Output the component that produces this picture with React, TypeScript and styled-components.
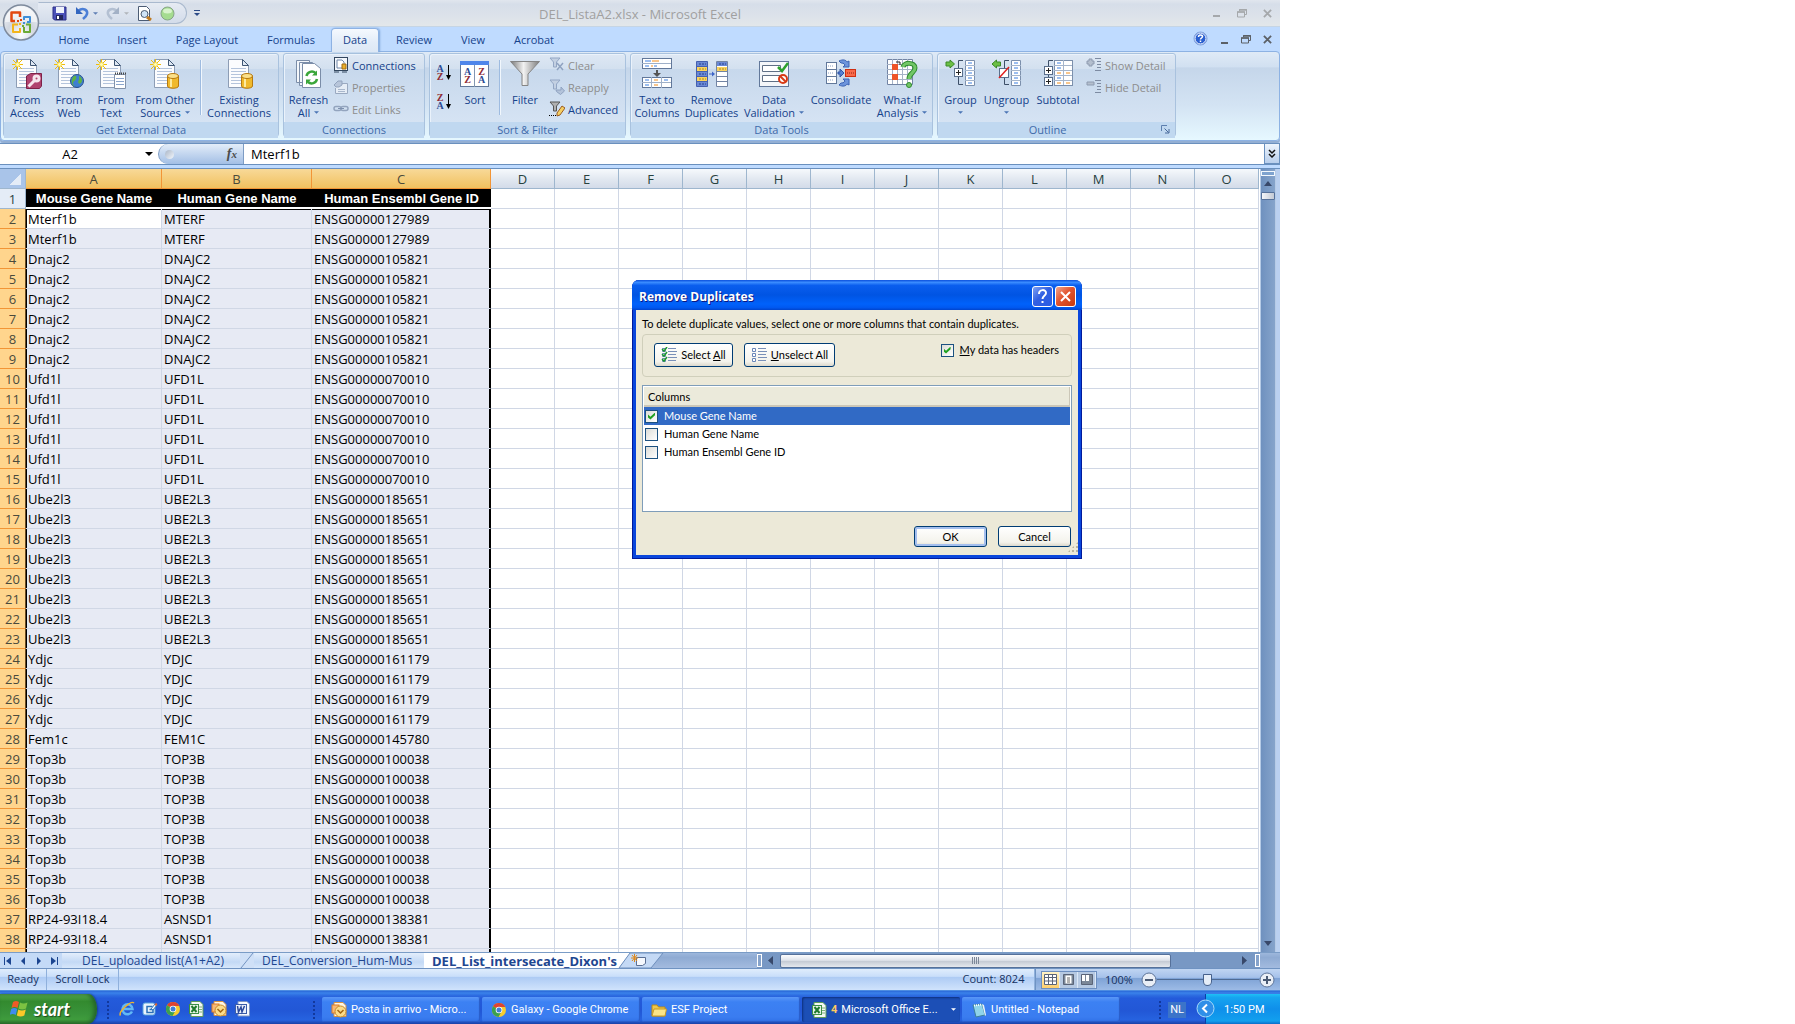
import React from 'react';
import styled, { createGlobalStyle, css } from 'styled-components';

const ui = `'Open Sans', 'Noto Sans', sans-serif`;
const dialogFont = `Lato, 'Noto Sans', sans-serif`;

const Global = createGlobalStyle`
  * { box-sizing: border-box; }
  html, body { margin: 0; height: 100%; background: #fff; overflow: hidden; }
  button, input { font: inherit; color: inherit; margin: 0; padding: 0; border: 0; background: none; }
  button { cursor: pointer; }
`;

const Desktop = styled.div`
  position: relative;
  display: flex;
  flex-direction: column;
  width: 100%;
  max-width: 1280px;
  height: 100vh;
  overflow: hidden;
  background: #bfdbff;
  font: 11px/13px ${ui};
  color: #15428b;
`;

/* ---------- title bar and tabs ---------- */

const TitleBar = styled.header`
  flex: none;
  display: grid;
  grid-template-columns: 1fr auto 1fr;
  align-items: center;
  height: 27px;
  background: linear-gradient(#e1e6ee, #d6dee9 16%, #dce2ea 60%, #e3e7ea);
  border-bottom: 1px solid #c6d5e4;
`;
const QuickAccess = styled.div`
  display: flex;
  align-items: center;
  gap: 4px;
  padding-left: 38px;
  height: 100%;
`;
const QuickPill = styled.div`
  display: flex;
  align-items: center;
  gap: 8px;
  width: 149px;
  height: 22px;
  padding-left: 13px;
  border: 1px solid #a9b9ce;
  border-left-color: transparent;
  border-radius: 0 11px 11px 0;
  background: linear-gradient(#e6ebf3, #d3dcea);
`;
const ToolButton = styled.button`
  display: flex;
  align-items: center;
  gap: 4px;
  flex: none;
`;
const OfficeButton = styled.button`
  position: absolute;
  left: 2px;
  top: 3px;
  width: 38px;
  height: 38px;
  z-index: 2;
  svg { display: block; }
`;
const WindowTitle = styled.h1`
  margin: 0;
  font: 400 13px/18px ${ui};
  color: #a0a0a0;
  padding-top: 2px;
`;
const WindowButtons = styled.div<{ $dim?: boolean }>`
  display: flex;
  justify-content: flex-end;
  align-items: center;
  gap: ${p => (p.$dim ? 16 : 12)}px;
  padding-right: 8px;
  color: ${p => (p.$dim ? '#a5a8ab' : '#5b6066')};
  button { display: flex; }
`;
const TabStrip = styled.nav`
  flex: none;
  display: flex;
  align-items: flex-end;
  height: 24px;
  padding-left: 47px;
  background: #bfdbff;
`;
const TabList = styled.div`
  flex: 1;
  display: flex;
  gap: 4px;
`;
const Tab = styled.button<{ $w: number; $active?: boolean }>`
  width: ${p => p.$w}px;
  height: 23px;
  padding-bottom: 2px;
  font: 11px/15px ${ui};
  color: #15428b;
  border: 1px solid transparent;
  border-bottom: 0;
  border-radius: 4px 4px 0 0;
  ${p => p.$active && css`
    position: relative;
    z-index: 1;
    margin-bottom: -1px;
    padding-bottom: 3px;
    height: 24px;
    border-color: #8db2e3;
    background: linear-gradient(#f5f9fe, #e2ecf8 60%, #dde8f5);
    box-shadow: 1px 0 2px #7fa6d8;
  `}
`;

/* ---------- ribbon ---------- */

const Ribbon = styled.section`
  flex: none;
  display: flex;
  gap: 4px;
  height: 90px;
  padding: 1px 2px 3px;
  border: 1px solid #8db2e3;
  border-radius: 4px;
  background: linear-gradient(#dfeaf6, #d1e0f1 17%, #c5d6ea 18%, #d3e3f3 60%, #e6f8ff);
  box-shadow: 0 2px 0 #93afd4, 0 3px 0 #a7c1e0;
`;
const RibbonGroup = styled.div<{ $w: number }>`
  flex: none;
  display: flex;
  flex-direction: column;
  width: ${p => p.$w}px;
  border: 1px solid #a9c2de;
  border-radius: 3px;
  background: linear-gradient(#dee8f4, #d3e0ef 18%, #c7d8ec 19%, #d9e6f5);
  box-shadow: inset 1px 1px 0 #eaf2fb;
`;
const GroupBody = styled.div`
  flex: 1;
  display: flex;
  align-items: flex-start;
  padding: 0 2px;
`;
const GroupCaption = styled.div`
  flex: none;
  display: flex;
  align-items: center;
  height: 16px;
  padding-bottom: 1px;
  background: #c0d8f0;
  color: #3e6aaa;
  span { flex: 1; text-align: center; }
  svg { margin: 0 5px 0 4px; }
`;
const BigButton = styled.button<{ $w: number }>`
  flex: none;
  display: flex;
  flex-direction: column;
  align-items: center;
  width: ${p => p.$w}px;
  height: 68px;
  padding-top: 4px;
  font: 11px/13px ${ui};
  color: #15428b;
  white-space: nowrap;
  svg.pic { display: block; flex: none; margin-bottom: 3px; }
`;
const LabelLine = styled.span`
  display: flex;
  align-items: center;
  gap: 4px;
  min-height: 13px;
`;
const Separator = styled.i`
  flex: none;
  width: 2px;
  height: 55px;
  margin: 6px 2px 0;
  border-left: 1px solid #9ebbe0;
  border-right: 1px solid #f1f7fd;
`;
const SmallList = styled.div`
  display: flex;
  flex-direction: column;
  padding-left: 2px;
`;
const SmallButton = styled.button<{ $off?: boolean }>`
  display: flex;
  align-items: center;
  gap: 3px;
  height: 22px;
  font: 11px/13px ${ui};
  color: ${p => (p.$off ? '#8d8d8d' : '#15428b')};
  white-space: nowrap;
  svg { flex: none; }
`;
const SortPair = styled.div`
  display: flex;
  flex-direction: column;
  gap: 9px;
  padding: 9px 0 0 3px;
  button { display: flex; }
`;

/* ---------- formula bar ---------- */

const FormulaBar = styled.div`
  flex: none;
  display: flex;
  height: 22px;
  margin-top: 2px;
  border: solid #6a90be;
  border-width: 1px 0;
  background: #fff;
  color: #000;
  font: 13px/18px ${ui};
`;
const NameBox = styled.div`
  display: flex;
  align-items: center;
  justify-content: space-between;
  width: 158px;
  flex: none;
  padding-right: 5px;
  input { width: 140px; text-align: center; }
`;
const FxArea = styled.div`
  flex: none;
  display: flex;
  align-items: center;
  justify-content: space-between;
  width: 86px;
  padding: 0 6px;
  border: solid #7d9cc4;
  border-width: 0 1px;
  border-radius: 10px 0 0 10px;
  background: linear-gradient(#e3edf9, #a3bfe5);
`;
const Knob = styled.i`
  width: 9px;
  height: 9px;
  border-radius: 50%;
  background: linear-gradient(135deg, #a9b5c6, #f4f8fd);
`;
const FxButton = styled.button`
  font: italic 700 14px/16px 'Liberation Serif', serif;
  color: #4c4c4c;
  small { font-size: 11px; }
`;
const FormulaInput = styled.input`
  flex: 1;
  min-width: 0;
  padding-left: 7px;
`;
const ExpandButton = styled.button`
  flex: none;
  display: flex;
  align-items: center;
  justify-content: center;
  width: 16px;
  border: 1px solid #6a90be;
  border-top: 0;
  background: linear-gradient(#eef5fd, #b9cfec);
`;

/* ---------- worksheet ---------- */

const Workspace = styled.main`
  flex: 1;
  min-height: 0;
  display: flex;
  margin-top: 3px;
  border-top: 1px solid #6a90be;
  background: #fff;
`;
const SheetView = styled.div`
  flex: 1;
  min-width: 0;
  overflow: hidden;
`;
const Sheet = styled.table`
  table-layout: fixed;
  border-collapse: separate;
  border-spacing: 0;
  width: 1259px;
  font: 13px/18px ${ui};
  color: #000;
`;
const cell = css`
  height: 20px;
  padding: 1px 0 0 2px;
  overflow: hidden;
  white-space: nowrap;
  border: solid #d0d7e5;
  border-width: 0 1px 1px 0;
`;
const Corner = styled.td`
  ${cell}
  background: linear-gradient(135deg, transparent 50%, #e4ecf7 50%) no-repeat 10px 4px / 11px 12px, #a9c4e9;
  border-color: #9eb6ce;
`;
const ColHead = styled.th<{ $on?: boolean }>`
  ${cell}
  padding: 1px 0 0;
  font-weight: 400;
  color: #27413e;
  text-align: center;
  background: linear-gradient(#f6f9fc, #e3e9f1 50%, #d3dbe9);
  border-color: #9eb6ce;
  ${p => p.$on && css`
    background: linear-gradient(#f8d998, #f1c15f);
    border-color: #f29536;
    color: #4a4a3c;
  `}
`;
const RowHead = styled.th<{ $on?: boolean }>`
  ${cell}
  padding: 1px 0 0;
  font-weight: 400;
  text-align: center;
  color: #27413e;
  background: #e4ecf7;
  border-color: #9eb6ce;
  ${p => p.$on && css`
    background: #ffd58d;
    border-color: #f29536;
    border-right-color: #6b4a20;
    color: #4a4a3c;
  `}
`;
const TitleCell = styled.td`
  ${cell}
  padding: 2px 0 0;
  background: #000;
  border-width: 0 0 2px;
  border-color: #fff;
  color: #fff;
  font: 700 13px/16px 'Liberation Sans', Arial, sans-serif;
  text-align: center;
`;
const Cell = styled.td<{ $first?: boolean; $left?: boolean; $right?: boolean; $active?: boolean }>`
  ${cell}
  background: ${p => (p.$active ? '#fff' : '#e7eaf4')};
  box-shadow: ${p => [
    p.$first && 'inset 0 1px #000',
    p.$left && 'inset 1px 0 #000',
    p.$right && 'inset -1px 0 #000',
  ].filter(Boolean).join(', ') || 'none'};
  ${p => p.$right && css`border-right-color: #000;`}
`;
const Blank = styled.td`${cell}`;

const VScroll = styled.div`
  flex: none;
  display: flex;
  flex-direction: column;
  align-items: center;
  width: 16px;
  margin-right: 4px;
  padding: 2px 0 4px;
  border: solid #b6cbe6;
  border-width: 0 1px;
  background: linear-gradient(90deg, #6f91bf, #86a4cb);
  button { display: flex; align-items: center; justify-content: center; }
`;
const SplitBox = styled.i`
  flex: none;
  width: 14px;
  height: 5px;
  border: 1px solid #f3f8fd;
  background: #7fa3cf;
`;
const VThumb = styled.div`
  width: 14px;
  height: 8px;
  margin-top: 1px;
  border: 1px solid #56719a;
  border-radius: 1px;
  background: linear-gradient(90deg, #f3f5f9, #c3c9d4);
`;
const Grow = styled.span`flex: 1;`;
const WorkEdge = styled.i`
  flex: none;
  width: 4px;
  margin-left: -4px;
  background: #bad0f0;
`;

/* ---------- sheet tabs ---------- */

const SheetBar = styled.div`
  flex: none;
  display: flex;
  align-items: stretch;
  height: 17px;
  padding-right: 20px;
  border-top: 1px solid #7a9cc6;
  border-bottom: 1px solid #6f93c2;
  background: linear-gradient(#9db7dc, #8fabd3 30%, #a3bbdf);
`;
const SheetNav = styled.div`
  display: flex;
  align-items: center;
  justify-content: space-around;
  width: 62px;
  flex: none;
  background: #c4daf7;
  button { display: flex; }
`;
const SheetTab = styled.button<{ $w: number; $pad: number; $active?: boolean }>`
  flex: none;
  width: ${p => p.$w}px;
  padding-left: ${p => p.$pad}px;
  font: 12px/14px ${ui};
  text-align: left;
  white-space: nowrap;
  color: #1e4690;
  background: linear-gradient(#e3eefc, #c3d9f5 60%, #d7e7fb);
  ${p => p.$active && css`
    font-weight: 700;
    font-size: 13px;
    background: #fff;
  `}
`;
const Slant = styled.svg`flex: none; display: block;`;
const NewSheet = styled.button`display: flex;`;
const HScroll = styled.div`
  display: flex;
  align-items: center;
  width: 503px;
  height: 100%;
  background: #7898c4;
`;
const Splitter = styled.i`
  flex: none;
  width: 5px;
  height: 13px;
  border: 1px solid #fff;
  background: #86a3cb;
`;
const HThumb = styled.div`
  flex: none;
  display: flex;
  align-items: center;
  justify-content: center;
  gap: 1px;
  width: 391px;
  height: 14px;
  border: 1px solid #56719a;
  border-radius: 2px;
  background: linear-gradient(#fdfdfe, #dfe3ea 45%, #c3c9d3 50%, #e5e8ee);
  i { width: 1px; height: 7px; background: #7c8798; }
`;
const HArrow = styled.button<{ $w: number }>`
  display: flex;
  align-items: center;
  justify-content: center;
  width: ${p => p.$w}px;
`;

/* ---------- status bar ---------- */

const StatusBar = styled.footer`
  flex: none;
  display: flex;
  height: 21px;
  color: #15305f;
  background: linear-gradient(#e0edfc, #c9defa 35%, #aecbf4 40%, #d0e3fc);
`;
const StatusItem = styled.span<{ $w: number }>`
  width: ${p => p.$w}px;
  padding-top: 3px;
  text-align: center;
  border-right: 1px solid #8fb0dc;
`;
const StatusRight = styled.div`
  flex: none;
  display: flex;
  align-items: center;
  width: 245px;
  padding-left: 5px;
  border-left: 1px solid #6f93c2;
  background: linear-gradient(#c0d5f2, #a5c1ea 40%, #7fa3d6 45%, #9dbbe6);
`;
const ViewButtons = styled.div`
  flex: none;
  display: flex;
  width: 56px;
  height: 18px;
  border: 1px solid #6c8ebf;
  button { flex: 1; display: flex; align-items: center; justify-content: center; background: #b6c9e2; border-right: 1px solid #dbe7f6; }
  button:first-child { background: linear-gradient(#fff3c8, #fdce6c); }
`;
const Zoom = styled.div`
  display: flex;
  align-items: center;
  flex: 1;
  min-width: 0;
  padding-left: 8px;
  label { flex: none; width: 36px; }
`;
const Slider = styled.input`
  appearance: none;
  flex: 1;
  width: 0;
  min-width: 0;
  height: 12px;
  background: linear-gradient(transparent 5px, #4f6b94 5px, #4f6b94 6px, transparent 6px);
  &::-webkit-slider-thumb {
    appearance: none;
    width: 9px;
    height: 12px;
    border: 1px solid #46618c;
    border-radius: 1px 1px 5px 5px;
    background: #e5edf8;
  }
`;

/* ---------- task bar ---------- */

const TaskBar = styled.nav`
  flex: none;
  display: flex;
  align-items: stretch;
  height: 34px;
  border-top: 1px solid #4d8ce0;
  background: linear-gradient(#2a68d8, #3a82ea 6%, #2c6be0 14%, #245bdb 22%, #2257d6 60%, #2663e0 88%, #1941a5);
  color: #fff;
  font: 11px/14px Roboto, 'Noto Sans', sans-serif;
`;
const StartButton = styled.button`
  flex: none;
  display: flex;
  align-items: center;
  gap: 5px;
  width: 97px;
  margin-top: 3px;
  padding-left: 10px;
  border-radius: 0 9px 9px 0 / 0 15px 15px 0;
  background: linear-gradient(#5da557, #4ba045 8%, #338a2f 25%, #39933a 65%, #3f9c3d 85%, #2b6f2a);
  box-shadow: inset -3px 0 4px #24642a, 1px 0 2px #163b93;
  font: italic 700 18px/22px Lato, sans-serif;
  text-shadow: 1px 1px 1px #1c4a1c;
`;
const Grip = styled.i<{ $ml: number }>`
  flex: none;
  width: 4px;
  margin: 9px 0 5px ${p => p.$ml}px;
  background: radial-gradient(circle, #12389c 1px, transparent 1px) 0 0 / 4px 4px;
`;
const QuickLaunch = styled.div`
  flex: none;
  display: flex;
  align-items: center;
  gap: 7px;
  width: 193px;
  padding: 3px 0 0 9px;
  button { display: flex; }
`;
const TaskList = styled.div`
  flex: 1;
  min-width: 0;
  display: flex;
  gap: 2px;
  padding: 6px 0 2px 6px;
`;
const Task = styled.button<{ $on?: boolean }>`
  flex: 0 0 158px;
  display: flex;
  align-items: center;
  gap: 4px;
  padding: 0 4px 0 9px;
  border-radius: 2px;
  white-space: nowrap;
  background: ${p => (p.$on ? '#1c4fb6' : 'linear-gradient(#5a97f7, #3c81f3 20%, #3a7cf0 80%, #3071e6)')};
  box-shadow: ${p => (p.$on ? 'inset 1px 1px 2px #0e307c' : 'inset -1px -1px 1px #2a5cc8')};
  svg { flex: none; }
  b { color: #ffca62; }
`;
const TaskLabel = styled.span`
  flex: 1;
  text-align: left;
`;
const Lang = styled.span`
  align-self: center;
  margin: 4px 19px 0 6px;
  padding: 1px 2px;
  background: #3b74c9;
`;
const Tray = styled.div`
  position: relative;
  flex: none;
  display: flex;
  align-items: center;
  width: 75px;
  margin-top: 3px;
  padding: 2px 0 0 18px;
  border-left: 1px solid #0b3fa8;
  background: linear-gradient(#1fc0f5, #16a4f0 12%, #0f8fea 50%, #12a0ee 90%, #0b6cc9);
`;
const TrayToggle = styled.button`
  position: absolute;
  left: -10px;
  top: 5px;
  display: flex;
`;

/* ---------- dialog ---------- */

const Dialog = styled.section`
  position: absolute;
  left: 632px;
  top: 280px;
  width: 450px;
  z-index: 5;
  padding: 0 4px 4px;
  border-radius: 7px 7px 0 0;
  background: #0a46dc;
  box-shadow: inset -1px -1px #001a9c, inset 1px 0 #001a9c;
  color: #000;
  font: 11px/14px ${dialogFont};
`;
const DialogTitle = styled.header`
  display: flex;
  align-items: center;
  gap: 2px;
  height: 30px;
  margin: 0 -4px;
  padding: 3px 6px 0 7px;
  border-radius: 7px 7px 0 0;
  background: linear-gradient(#0a4fdc, #3a8cff 8%, #0a5eee 18%, #0054e3 50%, #0062fb 80%, #0058f0 92%, #0044cc);
  h2 { flex: 1; margin: 0; color: #fff; font: 700 12px/16px ${ui}; text-shadow: 1px 1px #0a1883; }
`;
const CaptionButton = styled.button<{ $close?: boolean }>`
  display: flex;
  align-items: center;
  justify-content: center;
  width: 21px;
  height: 21px;
  border: 1px solid #fff;
  border-radius: 3px;
  background: ${p => (p.$close ? 'linear-gradient(135deg, #f0a58c, #e2542e 45%, #c63a11)' : 'linear-gradient(135deg, #7fa2f3, #3260e2 45%, #2a5ce4)')};
`;
const DialogBody = styled.div`
  display: flex;
  flex-direction: column;
  padding: 7px 6px 8px;
  background: #ece9d8;
  p { margin: 0; }
`;
const OptionBox = styled.div`
  display: flex;
  align-items: flex-start;
  gap: 11px;
  height: 43px;
  margin-top: 3px;
  padding: 8px 12px 0 11px;
  border: 1px solid #d0cfbb;
  border-radius: 4px;
`;
const XpButton = styled.button<{ $w: number; $h: number; $default?: boolean }>`
  display: flex;
  align-items: center;
  justify-content: center;
  gap: 4px;
  width: ${p => p.$w}px;
  height: ${p => p.$h}px;
  border: 1px solid #003c74;
  border-radius: 3px;
  background: linear-gradient(#fff, #f4f3ec 80%, #dcd8cc);
  box-shadow: ${p => (p.$default ? 'inset 0 0 0 2px #a5bfee' : 'none')};
`;
const Option = styled.label`
  display: flex;
  align-items: center;
  gap: 6px;
`;
const Box = styled.input`
  appearance: none;
  flex: none;
  display: block;
  width: 13px;
  height: 13px;
  border: 1px solid #1c5180;
  background: linear-gradient(135deg, #dcdcd7, #fff);
  &:checked::after {
    content: '';
    display: block;
    width: 7px;
    height: 7px;
    margin: 2px;
    background: #21a121;
    clip-path: polygon(0 30%, 35% 60%, 100% 0, 100% 40%, 35% 100%, 0 70%);
  }
`;
const ListBox = styled.fieldset`
  min-width: 0;
  height: 127px;
  margin: 8px 0 0;
  padding: 1px;
  border: 1px solid #7f9db9;
  background: #fff;
`;
const ListHead = styled.div`
  height: 20px;
  padding: 3px 0 0 4px;
  background: #ebeadb;
  border-bottom: 2px solid #cbc7b8;
  border-right: 1px solid #cbc7b8;
`;
const ListRow = styled.label<{ $on?: boolean }>`
  display: flex;
  align-items: center;
  gap: 6px;
  height: 18px;
  padding-left: 1px;
  background: ${p => (p.$on ? '#316ac5' : '#fff')};
  color: ${p => (p.$on ? '#fff' : '#000')};
`;
const Actions = styled.div`
  display: flex;
  justify-content: flex-end;
  gap: 11px;
  margin-top: 14px;
  padding-right: 1px;
`;
const ResizeGrip = styled.i`
  position: absolute;
  right: 4px;
  bottom: 5px;
  width: 12px;
  height: 12px;
  clip-path: polygon(100% 0, 100% 100%, 0 100%);
  background: conic-gradient(from 90deg at 2px 2px, transparent 270deg, #b8b49f 0) 0 0 / 4px 4px;
`;

/* ---------- drawings ---------- */

const Down = ({ c = '#4a74b4', w = 5 }: { c?: string; w?: number }) => (
  <svg width={w} height={Math.ceil(w / 2)} viewBox="0 0 6 3"><path d="M0 0h6L3 3z" fill={c} /></svg>
);
const Pic = ({ children, w = 32 }: { children: React.ReactNode; w?: number }) => (
  <svg className="pic" width={w} height="32" viewBox={`0 0 ${w} 32`}>{children}</svg>
);
const Mini = ({ children }: { children: React.ReactNode }) => (
  <svg width="16" height="16" viewBox="0 0 16 16">{children}</svg>
);
const Page = () => (
  <g>
    <path d="M5.500 1.500h14l6 6v22h-20z" fill="#fbfcfe" stroke="#8d9db5" />
    <path d="M19.500 1.500v6h6z" fill="#dfe8f3" stroke="#3f5674" />
    <path d="M8 10.500h15M8 13.500h15M8 16.500h15M8 19.500h15M8 22.500h15M8 25.500h15" stroke="#b4c4dc" />
  </g>
);
const Burst = () => (
  <g stroke="#efbd0c" strokeWidth="1">
    <path d="M6.500 1v11M1 6.500h11M2 2l9 9M11 2l-9 9" />
    <circle cx="6.500" cy="6.500" r="2" fill="#fffab8" stroke="#f7dc4a" />
  </g>
);
const Drum = () => (
  <g>
    <path d="M18.500 18v10c0 3 11 3 11 0V18z" fill="#f0b92c" stroke="#b77a10" />
    <path d="M21 19v10h2V19z" fill="#fdeaa0" />
    <ellipse cx="24" cy="18" rx="5.500" ry="2.500" fill="#fbe08a" stroke="#b77a10" />
  </g>
);
const OfficeLogo = () => (
  <svg width="38" height="38" viewBox="0 0 38 38">
    <defs>
      <radialGradient id="orb" cx="50%" cy="85%" r="80%"><stop offset="0" stopColor="#fff" /><stop offset=".5" stopColor="#d0d6df" /><stop offset="1" stopColor="#f2f4f7" /></radialGradient>
    </defs>
    <circle cx="19" cy="19.500" r="17.500" fill="url(#orb)" stroke="#7e8a9c" strokeWidth="1.500" />
    <path d="M3 19a16 15 0 0 1 32 0z" fill="#fff" opacity=".5" />
    <g fill="none" strokeWidth="2.500" strokeLinejoin="round">
      <path d="M13 18H9.500V9.500H18V14" stroke="#e2470f" />
      <path d="M22 17v-3h6v5h-3" stroke="#3f8fd8" strokeWidth="2" />
      <path d="M16 21.500h-5V29h7v-4" stroke="#f3b51b" strokeWidth="2" />
      <path d="M22 24v5h6v-7.500h-4" stroke="#6cab35" strokeWidth="2" />
    </g>
    <path d="M15 17h2v2h-2zM18 16h2v2h-2z" fill="#e2470f" />
    <path d="M21 19h2v2h-2z" fill="#3f8fd8" />
    <path d="M17 20h2v2h-2z" fill="#f3b51b" />
    <path d="M20 22h2v2h-2z" fill="#6cab35" />
  </svg>
);
const Minimize = () => <svg width="9" height="10" viewBox="0 0 9 10"><path d="M1 8h7" stroke="currentColor" strokeWidth="2" /></svg>;
const Restore = () => <svg width="10" height="9" viewBox="0 0 10 9"><path d="M2.500 2V.500h7v5H8" fill="none" stroke="currentColor" /><path d="M.500 3h7v5h-7z" fill="none" stroke="currentColor" /><path d="M0 3h8M2 1h8" stroke="currentColor" strokeWidth="1.500" /></svg>;
const Close = () => <svg width="9" height="9" viewBox="0 0 10 10"><path d="M1 1l8 8M9 1l-8 8" stroke="currentColor" strokeWidth="2" /></svg>;

const ChromeIcon = () => (
  <Mini>
    <circle cx="8" cy="8" r="7" fill="#f7cc2f" />
    <path d="M8 8L2 4.300A7 7 0 0 1 14.300 5H8z" fill="#dd4433" />
    <path d="M2 4.300A7 7 0 0 0 7.500 15L10.500 9.500 8 8z" fill="#3ba150" />
    <circle cx="8" cy="8" r="3.300" fill="#fff" /><circle cx="8" cy="8" r="2.500" fill="#3f7fd8" />
  </Mini>
);
const ExcelIcon = () => (
  <Mini>
    <path d="M3 .500h9l3 3v12H3z" fill="#f3f8f2" stroke="#5c9a5c" />
    <path d="M11 6h3M11 8.500h3M11 11h3" stroke="#7bb07b" />
    <rect x="1.500" y="3.500" width="9" height="9" fill="#e6f3e6" stroke="#3c8f46" />
    <path d="M3.500 5l5 6M8.500 5l-5 6" stroke="#1f7a2d" strokeWidth="2" />
  </Mini>
);
const OutlookIcon = () => (
  <Mini>
    <path d="M3 .500h9l3 3v11H3z" fill="#fff6e4" stroke="#d59244" />
    <rect x="1" y="3" width="7" height="8" fill="#f6b877" stroke="#e07f24" />
    <circle cx="9.500" cy="9.500" r="5.500" fill="#fbdc8b" stroke="#c98a28" />
    <path d="M6.500 8L9.500 11 12.500 8" fill="none" stroke="#a46610" strokeWidth="1.500" />
  </Mini>
);
const WordIcon = () => (
  <Mini>
    <path d="M4 .500h9l2.500 2.500v12H4z" fill="#f5f8fd" stroke="#7c94c4" />
    <rect x="1.500" y="3.500" width="11" height="9" fill="#e7eefa" stroke="#3a5ca8" />
    <path d="M3.500 5l1 6L7 6l1 5 2.500-6" fill="none" stroke="#28479b" strokeWidth="1.500" />
  </Mini>
);
const IeIcon = () => (
  <Mini>
    <path d="M13 10.500A5 5 0 1 1 13.500 8H5" fill="none" stroke="#62b8f5" strokeWidth="2.500" />
    <path d="M1.500 14.500C-1 11 12-1 15 2" fill="none" stroke="#f2b42c" strokeWidth="1.500" />
  </Mini>
);
const DesktopIcon = () => (
  <Mini>
    <rect x="1" y="2" width="12" height="12" rx="2" fill="#eaf4fd" stroke="#5ba4dc" />
    <path d="M10.500 5.500H5v6h6V8.500H7.500" fill="none" stroke="#2a6fb8" strokeWidth="1.500" />
    <path d="M9 8l4-5 2 1-4 5z" fill="#fff" stroke="#2f76ba" /><path d="M13 4l2-1" stroke="#d63" strokeWidth="2" />
  </Mini>
);
const FolderIcon = () => (
  <Mini><path d="M1 3h5l1.500 2H14v9H1z" fill="#f0c84a" stroke="#b98918" /><path d="M3 7h12.500L14 14H1z" fill="#fbe588" stroke="#c79a26" /></Mini>
);
const NotepadIcon = () => (
  <Mini><path d="M2 3l9-1 3 11-9 2z" fill="#8fd4ea" stroke="#3d7f9a" /><path d="M11 2l2 1 2 10-1 1z" fill="#e8f3f7" /><path d="M3 3.500l8-1" stroke="#fff" strokeWidth="2" strokeDasharray="1 1" /></Mini>
);
const WindowsFlag = () => (
  <svg width="19" height="18" viewBox="0 0 19 18">
    <path d="M3 2c2-1.200 4-1.200 6 0L7.500 8c-2-1.200-4-1.200-6 0z" fill="#ee5a28" />
    <path d="M10 2.500c2 1.200 5 1.200 7.500 0L16 8.500c-2.500 1.200-5 1.200-7.500 0z" fill="#7cc242" />
    <path d="M1.200 9c2-1.200 4-1.200 6 0l-1.500 6c-2-1.200-4-1.200-6 0z" fill="#3f8cf0" />
    <path d="M8.300 9.500c2 1.200 5 1.200 7.500 0l-1.500 6c-2.500 1.200-5 1.200-7.500 0z" fill="#fcc828" />
  </svg>
);
const LetterPair = ({ a, b, x, flip }: { a: string; b: string; x: number; flip?: boolean }) => (
  <g fontFamily="'Liberation Serif', serif" fontWeight="700" fontSize="10" textAnchor="middle">
    <text x={x} y="9" fill={flip ? '#8f2a34' : '#2c4b94'}>{a}</text>
    <text x={x} y="17" fill={flip ? '#2c4b94' : '#8f2a34'}>{b}</text>
  </g>
);
const SortIcon = ({ flip }: { flip?: boolean }) => (
  <svg width="18" height="20" viewBox="0 0 18 20">
    <LetterPair a={flip ? 'Z' : 'A'} b={flip ? 'A' : 'Z'} x={5} flip={flip} />
    <path d="M13.500 2v11" stroke="#000" /><path d="M11 12h5l-2.500 5z" />
  </svg>
);
const Funnel = ({ dim }: { dim?: boolean }) => (
  <path d="M1 1h10L7.500 5v5h-3V5z" fill={dim ? '#c3d0e2' : '#b0b0b0'} stroke={dim ? '#93a6c4' : '#555'} />
);
const GroupTree = ({ children }: { children: React.ReactNode }) => (
  <Pic>
    <path d="M18 2.500h-4.500v24H18" fill="none" stroke="#3d4f68" />
    <path d="M20.500 2.500h9v25h-9z" fill="#fff" stroke="#7c90ac" />
    <path d="M20 7.500h10M20 12.500h10M20 17.500h10M20 22.500h10" stroke="#a5b5cb" />
    <path d="M23 5h4M23 10h4M23 15h4M23 20h4M23 25h4" stroke="#3b7fe0" />
    {children}
  </Pic>
);
const Plus = ({ x, y }: { x: number; y: number }) => (
  <g transform={`translate(${x} ${y})`}><rect x=".500" y=".500" width="8" height="8" fill="#fff" stroke="#5a6f8c" /><path d="M2 4.500h5M4.500 2v5" stroke="#222" /></g>
);
const Arrow = ({ left }: { left?: boolean }) => (
  <path d={left ? 'M9.500 4h-4V2L1 6l4.500 4V8h4z' : 'M1 4h4V2l4.500 4L5 10V8H1z'} fill="#6cbf45" stroke="#3a8a26" />
);

/* ---------- ribbon content ---------- */

const Big = ({ w, lines, menu, children }: { w: number; lines: string[]; menu?: boolean; children: React.ReactNode }) => (
  <BigButton $w={w}>
    {children}
    {lines.map((t, i) => (
      <LabelLine key={i}>{t}{menu && i === lines.length - 1 && <Down />}</LabelLine>
    ))}
  </BigButton>
);

const RibbonBar = () => (
  <Ribbon>
    <RibbonGroup $w={276}>
      <GroupBody>
        <Big w={42} lines={['From', 'Access']}><Pic><Page /><Burst /><path d="M15.500 18l4-2.500h11V28l-2 2.500h-13z" fill="#b0436f" stroke="#7e2148" /><circle cx="25.500" cy="20.500" r="2.500" fill="none" stroke="#f6e6ee" strokeWidth="3" /><path d="M23.500 22.500l-6 6" stroke="#f6e6ee" strokeWidth="3" /></Pic></Big>
        <Big w={42} lines={['From', 'Web']}><Pic><Page /><Burst /><circle cx="24" cy="23" r="6.500" fill="#3f7fd0" stroke="#28508c" /><path d="M20 19c3-3 4 0 3 2s-3 2-3 4 2 3 1 3-4-4-1-9zM26 18c3 1 4 5 2 7s-4-1-2-3z" fill="#5fb343" /></Pic></Big>
        <Big w={42} lines={['From', 'Text']}><Pic><Page /><Burst /><path d="M19.500 16.500h11v14h-11z" fill="#fff" stroke="#8292aa" /><path d="M20 15.500h11" stroke="#444" strokeWidth="2" strokeDasharray="1 1" /><path d="M21 20.500h8M21 23.500h8M21 26.500h8" stroke="#8ba5cc" /></Pic></Big>
        <Big w={66} lines={['From Other', 'Sources']} menu><Pic><Page /><Burst /><Drum /></Pic></Big>
        <Separator />
        <Big w={70} lines={['Existing', 'Connections']}><Pic><Page /><Drum /></Pic></Big>
      </GroupBody>
      <GroupCaption><span>Get External Data</span></GroupCaption>
    </RibbonGroup>
    <RibbonGroup $w={142}>
      <GroupBody>
        <Big w={45} lines={['Refresh', 'All']} menu>
          <Pic><path d="M3.500 2.500h13v22h-13zM6.500 4.500h13v23h-13z" fill="#f4f7fb" stroke="#7b8da8" /><path d="M9.500 5.500h12l6 5v19h-18z" fill="#fff" stroke="#7b8da8" /><path d="M13.500 18a5.500 5.500 0 0 1 9-3M24 21a5.500 5.500 0 0 1-9 3" fill="none" stroke="#3aa63a" strokeWidth="2.500" /><path d="M19 17.500h5v-5zM18 21.500h-5v5z" fill="#3aa63a" /></Pic>
        </Big>
        <SmallList>
          <SmallButton><Mini><rect x="1.500" y=".500" width="13" height="13" fill="#f3f7fc" stroke="#33475f" /><path d="M4 3h5l2 2v6H4z" fill="#fff" stroke="#6f86a8" /><path d="M9 7h4v5H9z" fill="#e9ae2b" stroke="#a36d10" /><path d="M1 15h5M9 15h5" stroke="#33475f" /></Mini>Connections</SmallButton>
          <SmallButton $off><Mini><path d="M5.500 4.500h9v10h-12V9" fill="#e6edf6" stroke="#9aa9c0" /><path d="M5 10.500h7M5 12.500h7" stroke="#a9b7cc" /><path d="M1 6l4-4h4v4L6 8H3z" fill="#b7c5da" stroke="#93a4be" /></Mini>Properties</SmallButton>
          <SmallButton $off><Mini><rect x="1" y="5.500" width="7" height="4" rx="2" fill="none" stroke="#93a4be" strokeWidth="1.500" /><rect x="8" y="5.500" width="7" height="4" rx="2" fill="none" stroke="#93a4be" strokeWidth="1.500" /><path d="M5 7.500h6" stroke="#7d90ae" /></Mini>Edit Links</SmallButton>
        </SmallList>
      </GroupBody>
      <GroupCaption><span>Connections</span></GroupCaption>
    </RibbonGroup>
    <RibbonGroup $w={197}>
      <GroupBody>
        <SortPair>
          <button aria-label="Sort A to Z"><SortIcon /></button>
          <button aria-label="Sort Z to A"><SortIcon flip /></button>
        </SortPair>
        <Big w={44} lines={['Sort']}>
          <Pic><rect x="1.500" y="3.500" width="28" height="25" fill="#fff" stroke="#62789a" /><path d="M1 3h29v4H1z" fill="#4f86ea" /><path d="M15.500 7v22" stroke="#8296b2" /><g transform="translate(0 8)"><LetterPair a="A" b="Z" x={8.500} /><LetterPair a="Z" b="A" x={22.500} flip /></g></Pic>
        </Big>
        <Separator />
        <Big w={44} lines={['Filter']}>
          <Pic><defs><linearGradient id="fn"><stop offset="0" stopColor="#777" /><stop offset=".45" stopColor="#f2f2f2" /><stop offset="1" stopColor="#7b7b7b" /></linearGradient></defs><path d="M1.500 3.500h29L19 16v11.500h-6V16z" fill="url(#fn)" stroke="#858585" /></Pic>
        </Big>
        <SmallList>
          <SmallButton $off><Mini><Funnel dim /><path d="M8 6l6 7M14 6l-6 7" stroke="#8fa2c0" strokeWidth="1.500" /></Mini>Clear</SmallButton>
          <SmallButton $off><Mini><Funnel dim /><path d="M7 11h5V8l3.500 4-4 3.500-4-3z" fill="#b3c3da" stroke="#8fa2c0" /></Mini>Reapply</SmallButton>
          <SmallButton><Mini><Funnel /><path d="M8 12l5-7 3 2-5 7-3 1z" fill="#f5cf62" stroke="#9b5d22" /><path d="M0 14.500h7" stroke="#000" strokeDasharray="1 1" /></Mini>Advanced</SmallButton>
        </SmallList>
      </GroupBody>
      <GroupCaption><span>Sort &amp; Filter</span></GroupCaption>
    </RibbonGroup>
    <RibbonGroup $w={303}>
      <GroupBody>
        <Big w={48} lines={['Text to', 'Columns']}>
          <Pic><rect x="1.500" y=".500" width="29" height="10" fill="#fff" stroke="#62789a" /><path d="M1 5.500h29" stroke="#9fb0c8" /><path d="M4 3h6M4 8h4M13 8h3" stroke="#3b7fe0" /><path d="M11 3h7M10 8h2" stroke="#f08c1a" /><path d="M15 12h2v3h3l-4 4-4-4h3z" fill="#555" /><rect x="1.500" y="19.500" width="29" height="10" fill="#fff" stroke="#62789a" /><path d="M1 24.500h29M10.500 19v11M20.500 19v11" stroke="#9fb0c8" /><path d="M4 22h4M4 27h4M23 22h4" stroke="#3b7fe0" /><path d="M13 22h4M13 27h4" stroke="#f08c1a" /></Pic>
        </Big>
        <Big w={61} lines={['Remove', 'Duplicates']}>
          <Pic>
            <path d="M.500 3.500h11v25H.500z" fill="#6a88d4" stroke="#4560b0" /><path d="M1 9h10v4H1zM1 19h10v4H1z" fill="#fbd45c" />
            <path d="M1 8.500h10M1 13.500h10M1 18.500h10M1 23.500h10" stroke="#4560b0" /><path d="M3 6h7M3 16h7M3 26h7" stroke="#24408e" strokeDasharray="2 1" /><path d="M3 11h7M3 21h7" stroke="#a88a2a" strokeDasharray="2 1" />
            <path d="M13 15.500h3v-2l3 2.500-3 2.500v-2h-3z" fill="#3f66c8" />
            <path d="M20.500 3.500h11v25h-11z" fill="#fff" stroke="#7284a4" /><path d="M21 4h10v4H21z" fill="#6a88d4" /><path d="M21 9h10v4H21z" fill="#fbd45c" /><path d="M21 13.500h10M21 18.500h10M21 23.500h10" stroke="#7284a4" />
            <path d="M23 6h7" stroke="#24408e" strokeDasharray="2 1" /><path d="M23 11h7" stroke="#a88a2a" strokeDasharray="2 1" />
          </Pic>
        </Big>
        <Big w={64} lines={['Data', 'Validation']} menu>
          <Pic><rect x="1.500" y="3.500" width="29" height="25" fill="#f4f6f9" stroke="#62789a" /><path d="M4.500 7.500h18v6h-18zM4.500 17.500h18v6h-18z" fill="#fff" stroke="#5f6f85" /><path d="M20 9l4 4 6-8" fill="none" stroke="#2ca02c" strokeWidth="2.500" /><circle cx="25" cy="21" r="4" fill="#fff" stroke="#d83a16" strokeWidth="2" /><path d="M22 18l6 6" stroke="#d83a16" strokeWidth="2" /></Pic>
        </Big>
        <Big w={70} lines={['Consolidate']}>
          <Pic><rect x="1.500" y="4.500" width="10" height="21" fill="#fff" stroke="#62789a" /><path d="M1 11.500h11M1 18.500h11" stroke="#62789a" /><path d="M3 8h6M3 15h6M3 22h6" stroke="#8aa0c4" strokeDasharray="1 1" /><path d="M13 14h2v-3l4 4-4 4v-3h-2z" fill="#5580d4" stroke="#2e54a8" /><path d="M14 3c4-2 7-1 8 1l2-1v6h-6l2-2c-1-2-3-2-4-2zM14 27c4 2 7 1 8-1l2 1v-6h-6l2 2c-1 2-3 2-4 2z" fill="#6d94dc" stroke="#3a62b4" /><rect x="20.500" y="11.500" width="10" height="7" fill="#f9694a" stroke="#cf2f12" /><path d="M22 15h7" stroke="#8e2412" strokeDasharray="1 1" /></Pic>
        </Big>
        <Big w={52} lines={['What-If', 'Analysis']} menu>
          <Pic><path d="M1.500 1.500h25v25h-25z" fill="#fff" stroke="#7284a4" /><path d="M1 6.500h25M1 11.500h25M1 16.500h25M1 21.500h25M6.500 1v25M11.500 1v25M16.500 1v25M21.500 1v25" stroke="#a5b2c6" /><path d="M6 6h6v6H6zM6 16h6v6H6z" fill="#ee5428" /><path d="M10 4h4v3" fill="none" stroke="#222" /><path d="M17 9c1-5 12-5 12 1 0 5-6 5-6 11" fill="none" stroke="#2f8a2f" strokeWidth="5" /><path d="M17 9c1-5 12-5 12 1 0 5-6 5-6 11" fill="none" stroke="#72c766" strokeWidth="3" /><circle cx="23" cy="27" r="2.500" fill="#72c766" stroke="#2f8a2f" /></Pic>
        </Big>
      </GroupBody>
      <GroupCaption><span>Data Tools</span></GroupCaption>
    </RibbonGroup>
    <RibbonGroup $w={239}>
      <GroupBody>
        <Big w={41} lines={['Group', '']} menu><GroupTree><Plus x={9} y={10} /><Arrow /></GroupTree></Big>
        <Big w={51} lines={['Ungroup', '']} menu><GroupTree><rect x="8.500" y="10.500" width="9" height="9" fill="#fff" stroke="#5a6f8c" /><path d="M8 20L18 9" stroke="#e02020" strokeWidth="1.500" /><Arrow left /></GroupTree></Big>
        <Big w={52} lines={['Subtotal']}>
          <Pic><path d="M11 2.500H6.500v24H11" fill="none" stroke="#3d4f68" /><rect x="12.500" y="2.500" width="18" height="25" fill="#fff" stroke="#7c90ac" /><path d="M12 7.500h18M12 12.500h18M12 17.500h18M12 22.500h18M21.500 2v25" stroke="#a5b5cb" /><path d="M15 5h4M15 10h4M15 20h4" stroke="#3b7fe0" /><path d="M15 15h4M24 15h4M15 25h4M24 25h4" stroke="#f08c1a" /><Plus x={2} y={8} /><Plus x={2} y={19} /></Pic>
        </Big>
        <SmallList>
          <SmallButton $off><Mini><path d="M1 4h2V2h3v2h2v3H6v2H3V7H1z" fill="#b4bfce" stroke="#8e9bb0" /><path d="M9 1.500h6M11 4.500h4M11 7.500h4M11 10.500h4M9 13.500h6" stroke="#7d8ba2" /></Mini>Show Detail</SmallButton>
          <SmallButton $off><Mini><path d="M1 3h7v3H1z" fill="#b4bfce" stroke="#8e9bb0" /><path d="M9 1.500h6M11 4.500h4M11 7.500h4M11 10.500h4M9 13.500h6" stroke="#7d8ba2" /></Mini>Hide Detail</SmallButton>
        </SmallList>
      </GroupBody>
      <GroupCaption><span>Outline</span><svg width="9" height="9" viewBox="0 0 9 9"><path d="M.500 6V.500H6" fill="none" stroke="#5d7fae" /><path d="M3.500 3.500l4 4M8 4v4H4" fill="none" stroke="#46689a" /></svg></GroupCaption>
    </RibbonGroup>
  </Ribbon>
);

/* ---------- data ---------- */

type Gene = [string, string, string];
const repeat = (n: number, g: Gene): Gene[] => Array.from({ length: n }, () => g);
const rows: Gene[] = [
  ...repeat(2, ['Mterf1b', 'MTERF', 'ENSG00000127989']),
  ...repeat(6, ['Dnajc2', 'DNAJC2', 'ENSG00000105821']),
  ...repeat(6, ['Ufd1l', 'UFD1L', 'ENSG00000070010']),
  ...repeat(8, ['Ube2l3', 'UBE2L3', 'ENSG00000185651']),
  ...repeat(4, ['Ydjc', 'YDJC', 'ENSG00000161179']),
  ...repeat(1, ['Fem1c', 'FEM1C', 'ENSG00000145780']),
  ...repeat(8, ['Top3b', 'TOP3B', 'ENSG00000100038']),
  ...repeat(2, ['RP24-93I18.4', 'ASNSD1', 'ENSG00000138381']),
];
const headers = ['Mouse Gene Name', 'Human Gene Name', 'Human Ensembl Gene ID'];
const letters = 'ABCDEFGHIJKLMNO'.split('');
const blanks = letters.slice(3);
const widths = [26, 136, 150, 179, ...blanks.map(() => 64)];
const tabs: [string, number][] = [['Home', 54], ['Insert', 54], ['Page Layout', 88], ['Formulas', 72], ['Data', 48], ['Review', 62], ['View', 48], ['Acrobat', 66]];

const Worksheet = () => (
  <Sheet>
    <colgroup>{widths.map((w, i) => <col key={i} width={w} />)}</colgroup>
    <thead>
      <tr><Corner />{letters.map((l, i) => <ColHead key={l} $on={i < 3}>{l}</ColHead>)}</tr>
    </thead>
    <tbody>
      <tr><RowHead>1</RowHead>{headers.map(h => <TitleCell key={h}>{h}</TitleCell>)}{blanks.map(l => <Blank key={l} />)}</tr>
      {rows.map((r, i) => (
        <tr key={i}>
          <RowHead $on>{i + 2}</RowHead>
          {r.map((t, c) => <Cell key={c} $first={i === 0} $left={c === 0} $right={c === 2} $active={i === 0 && c === 0}>{t}</Cell>)}
          {blanks.map(l => <Blank key={l} />)}
        </tr>
      ))}
      <tr><RowHead $on /><Cell $left /><Cell /><Cell $right />{blanks.map(l => <Blank key={l} />)}</tr>
    </tbody>
  </Sheet>
);

const SelectIcon = ({ on }: { on?: boolean }) => (
  <svg width="16" height="16" viewBox="0 0 16 16">
    <path d="M1.500 1.500h3v3h-3zM1.500 6.500h3v3h-3zM1.500 11.500h3v3h-3z" fill="#fff" stroke="#6a86b8" />
    <path d="M7 1.500h8M7 4.500h9M7 7.500h8M7 10.500h9M7 13.500h8" stroke="#7a90b8" />
    {on && <path d="M1 2l2 2 3-4M1 7l2 2 3-4M1 12l2 2 3-4" fill="none" stroke="#1f9a2f" strokeWidth="1.500" />}
  </svg>
);

const DuplicatesDialog = () => (
  <Dialog role="dialog" aria-labelledby="dlg-title">
    <DialogTitle>
      <h2 id="dlg-title">Remove Duplicates</h2>
      <CaptionButton aria-label="Help"><svg width="13" height="15" viewBox="0 0 13 15"><path d="M3 5c0-5 7-5 7-1 0 3-3.500 2.500-3.500 6" fill="none" stroke="#fff" strokeWidth="2" /><path d="M5.500 12h2v2h-2z" fill="#fff" /></svg></CaptionButton>
      <CaptionButton $close aria-label="Close"><svg width="13" height="13" viewBox="0 0 13 13"><path d="M2 2l9 9M11 2l-9 9" stroke="#fff" strokeWidth="2" /></svg></CaptionButton>
    </DialogTitle>
    <DialogBody>
      <p>To delete duplicate values, select one or more columns that contain duplicates.</p>
      <OptionBox>
        <XpButton $w={79} $h={24}><SelectIcon on /><span>Select <u>A</u>ll</span></XpButton>
        <XpButton $w={91} $h={24}><SelectIcon /><span><u>U</u>nselect All</span></XpButton>
        <Grow />
        <Option><Box type="checkbox" defaultChecked /><span><u>M</u>y data has headers</span></Option>
      </OptionBox>
      <ListBox aria-label="Columns">
        <ListHead>Columns</ListHead>
        {headers.map((h, i) => <ListRow key={h} $on={i === 0}><Box type="checkbox" defaultChecked={i === 0} />{h}</ListRow>)}
      </ListBox>
      <Actions>
        <XpButton $w={73} $h={21} $default>OK</XpButton>
        <XpButton $w={73} $h={21}>Cancel</XpButton>
      </Actions>
    </DialogBody>
    <ResizeGrip />
  </Dialog>
);

const sheetNav = [
  { label: 'First sheet', d: 'M0 0h1v8H0zM7 0v8L2 4z' },
  { label: 'Previous sheet', d: 'M6 0v8L2 4z' },
  { label: 'Next sheet', d: 'M2 0v8l4-4z' },
  { label: 'Last sheet', d: 'M7 0h1v8H7zM1 0v8l5-4z' },
];

export default function App() {
  return (
    <Desktop>
      <Global />
      <OfficeButton aria-label="Office Button"><OfficeLogo /></OfficeButton>
      <TitleBar>
        <QuickAccess>
          <QuickPill>
            <ToolButton aria-label="Save"><svg width="15" height="15" viewBox="0 0 15 15"><path d="M1 1h13v13H2.500L1 12.500z" fill="#4a50b8" stroke="#2b2f86" /><path d="M4 1h8v6H4z" fill="#eef2fb" /><path d="M4 9h7v5H4z" fill="#23275c" /><path d="M5 10h2v3H5z" fill="#fff" /></svg></ToolButton>
            <ToolButton aria-label="Undo"><svg width="14" height="14" viewBox="0 0 14 14"><path d="M3 5c5-4 10-1 9 3-1 3-3 4-4 5" fill="none" stroke="#4c7fd6" strokeWidth="2.500" /><path d="M1 1v7h7z" fill="#3467c0" /></svg><Down c="#5f7fb4" /></ToolButton>
            <ToolButton aria-label="Redo"><svg width="14" height="14" viewBox="0 0 14 14"><path d="M11 5C6 1 1 4 2 8c1 3 3 4 4 5" fill="none" stroke="#b4c0d2" strokeWidth="2.500" /><path d="M13 1v7H6z" fill="#a3b1c6" /></svg><Down c="#b0b4ba" /></ToolButton>
            <ToolButton aria-label="Print Preview"><svg width="15" height="15" viewBox="0 0 15 15"><path d="M1.500.500h8l3 3v11h-11z" fill="#fff" stroke="#4c5c74" /><circle cx="7.500" cy="8" r="3.500" fill="#cfe4f8" stroke="#4c5c74" /><path d="M10 11l4 3" stroke="#c07a20" strokeWidth="3" /></svg></ToolButton>
            <ToolButton aria-label="Run"><svg width="15" height="15" viewBox="0 0 15 15"><circle cx="7.500" cy="7.500" r="6.500" fill="#a5dc90" stroke="#86a586" /><ellipse cx="7.500" cy="5" rx="4.500" ry="2.500" fill="#d8f3cc" /></svg></ToolButton>
          </QuickPill>
          <ToolButton aria-label="Customize Quick Access Toolbar"><svg width="12" height="8" viewBox="0 0 12 8"><path d="M3 1.500h6" stroke="#2b4a86" /><path d="M3 4h6L6 7z" fill="#2b4a86" /></svg></ToolButton>
        </QuickAccess>
        <WindowTitle>DEL_ListaA2.xlsx - Microsoft Excel</WindowTitle>
        <WindowButtons $dim>
          <button aria-label="Minimize"><Minimize /></button>
          <button aria-label="Restore"><Restore /></button>
          <button aria-label="Close"><Close /></button>
        </WindowButtons>
      </TitleBar>
      <TabStrip>
        <TabList>{tabs.map(([t, w]) => <Tab key={t} $w={w} $active={t === 'Data'}>{t}</Tab>)}</TabList>
        <WindowButtons>
          <button aria-label="Help"><svg width="15" height="23" viewBox="0 0 15 23"><circle cx="7.500" cy="10.500" r="6.500" fill="#2a5fd0" stroke="#7fa0dc" /><circle cx="7.500" cy="10.500" r="5.500" fill="none" stroke="#fff" /><path d="M5.500 9c0-3 4-2.500 4-.5 0 1.500-2 1.500-2 3M7.500 12.500v1.500" fill="none" stroke="#fff" strokeWidth="1.500" /></svg></button>
          <button aria-label="Minimize workbook"><Minimize /></button>
          <button aria-label="Restore workbook"><Restore /></button>
          <button aria-label="Close workbook"><Close /></button>
        </WindowButtons>
      </TabStrip>
      <RibbonBar />
      <FormulaBar>
        <NameBox><input aria-label="Name Box" defaultValue="A2" /><Down c="#000" w={8} /></NameBox>
        <FxArea><Knob /><FxButton aria-label="Insert Function">f<small>x</small></FxButton></FxArea>
        <FormulaInput aria-label="Formula" defaultValue="Mterf1b" />
        <ExpandButton aria-label="Expand Formula Bar"><svg width="8" height="9" viewBox="0 0 8 9"><path d="M1 1l3 3 3-3M1 5l3 3 3-3" fill="none" stroke="#111" strokeWidth="1.500" /></svg></ExpandButton>
      </FormulaBar>
      <Workspace>
        <SheetView><Worksheet /></SheetView>
        <VScroll>
          <SplitBox />
          <button aria-label="Scroll up"><svg width="10" height="15" viewBox="0 0 10 15"><path d="M1 10h8L5 5z" fill="#38486a" /></svg></button>
          <VThumb />
          <Grow />
          <button aria-label="Scroll down"><svg width="10" height="10" viewBox="0 0 10 10"><path d="M1 3h8L5 8z" fill="#38486a" /></svg></button>
        </VScroll>
        <WorkEdge />
      </Workspace>
      <SheetBar>
        <SheetNav>{sheetNav.map(n => <button key={n.label} aria-label={n.label}><svg width="8" height="8" viewBox="0 0 8 8"><path d={n.d} fill="#1c4590" /></svg></button>)}</SheetNav>
        <SheetTab $w={178} $pad={20}>DEL_uploaded list(A1+A2)</SheetTab>
        <Slant width="14" height="15" viewBox="0 0 14 15"><path d="M0 0h14v15H0z" fill="#cfe0f7" /><path d="M1 15L13 0" stroke="#7393c0" /></Slant>
        <SheetTab $w={170} $pad={8}>DEL_Conversion_Hum-Mus</SheetTab>
        <SheetTab $w={194} $pad={8} $active>DEL_List_intersecate_Dixon's</SheetTab>
        <NewSheet aria-label="Insert Worksheet">
          <svg width="46" height="15" viewBox="0 0 46 15"><path d="M0 0h12L1 15H0z" fill="#fff" /><path d="M12 0h33L33 15H1z" fill="#c4d9f5" stroke="#6f8fbd" /><path d="M18.500 4.500h9v6l-3 2h-6z" fill="#f5f8fd" stroke="#5a6f94" /><path d="M13 5h7M16.500 1v8M14 2l5 6M19 2l-5 6" stroke="#e08a1c" /></svg>
        </NewSheet>
        <Grow />
        <HScroll>
          <Splitter />
          <HArrow $w={18} aria-label="Scroll left"><svg width="6" height="9" viewBox="0 0 6 9"><path d="M5 0v9L0 4.500z" fill="#38486a" /></svg></HArrow>
          <HThumb><i /><i /><i /><i /></HThumb>
          <Grow />
          <HArrow $w={22} aria-label="Scroll right"><svg width="6" height="9" viewBox="0 0 6 9"><path d="M1 0v9l5-4.500z" fill="#38486a" /></svg></HArrow>
          <Splitter />
        </HScroll>
      </SheetBar>
      <StatusBar>
        <StatusItem $w={47}>Ready</StatusItem>
        <StatusItem $w={72}>Scroll Lock</StatusItem>
        <Grow />
        <StatusItem $w={82}>Count: 8024</StatusItem>
        <StatusRight>
          <ViewButtons>
            <button aria-label="Normal"><svg width="13" height="11" viewBox="0 0 13 11"><path d="M.500.500h12v10H.500zM.500 3.500h12M.500 7h12M4.500.500v10M8.500.500v10" fill="#fff" stroke="#5a6478" /></svg></button>
            <button aria-label="Page Layout view"><svg width="11" height="11" viewBox="0 0 11 11"><path d="M.500.500h10v10H.500z" fill="#7b8797" stroke="#5a6478" /><path d="M2.500 1.500h6v8h-6z" fill="#fff" /><path d="M4 4h3M4 6h3M4 8h3" stroke="#666" /></svg></button>
            <button aria-label="Page Break Preview"><svg width="12" height="11" viewBox="0 0 12 11"><path d="M.500.500h11v10H.500z" fill="#7b8797" stroke="#5a6478" /><path d="M1 1h3v6H1zM5 1h3v6H5z" fill="#fff" /></svg></button>
          </ViewButtons>
          <Zoom>
            <label htmlFor="zoom">100%</label>
            <ToolButton aria-label="Zoom out"><svg width="16" height="16" viewBox="0 0 16 16"><circle cx="8" cy="8" r="7" fill="#e9eef6" stroke="#5d7499" /><path d="M4 8h8" stroke="#4a5a74" strokeWidth="2" /></svg></ToolButton>
            <Slider id="zoom" type="range" min={0} max={100} defaultValue={49} />
            <ToolButton aria-label="Zoom in"><svg width="21" height="16" viewBox="0 0 21 16"><circle cx="8" cy="8" r="7" fill="#e9eef6" stroke="#5d7499" /><path d="M4 8h8M8 4v8" stroke="#4a5a74" strokeWidth="2" /></svg></ToolButton>
          </Zoom>
        </StatusRight>
      </StatusBar>
      <TaskBar>
        <StartButton><WindowsFlag />start</StartButton>
        <Grip $ml={9} />
        <QuickLaunch>
          <button aria-label="Internet Explorer"><IeIcon /></button>
          <button aria-label="Show Desktop"><DesktopIcon /></button>
          <button aria-label="Chrome"><ChromeIcon /></button>
          <button aria-label="Excel"><ExcelIcon /></button>
          <button aria-label="Outlook"><OutlookIcon /></button>
          <button aria-label="Word"><WordIcon /></button>
        </QuickLaunch>
        <Grip $ml={9} />
        <TaskList>
          <Task><OutlookIcon /><TaskLabel>Posta in arrivo - Micro...</TaskLabel></Task>
          <Task><ChromeIcon /><TaskLabel>Galaxy - Google Chrome</TaskLabel></Task>
          <Task><FolderIcon /><TaskLabel>ESF Project</TaskLabel></Task>
          <Task $on><ExcelIcon /><b>4</b><TaskLabel>Microsoft Office E...</TaskLabel><Down c="#fff" /></Task>
          <Task><NotepadIcon /><TaskLabel>Untitled - Notepad</TaskLabel></Task>
        </TaskList>
        <Grip $ml={0} />
        <Lang>NL</Lang>
        <Tray>
          <TrayToggle aria-label="Show hidden icons"><svg width="19" height="19" viewBox="0 0 19 19"><circle cx="9.500" cy="9.500" r="8.500" fill="#2f8fe8" stroke="#a9dcfa" /><path d="M11 5.500l-4 4 4 4" fill="none" stroke="#fff" strokeWidth="2" /></svg></TrayToggle>
          1:50 PM
        </Tray>
      </TaskBar>
      <DuplicatesDialog />
    </Desktop>
  );
}
